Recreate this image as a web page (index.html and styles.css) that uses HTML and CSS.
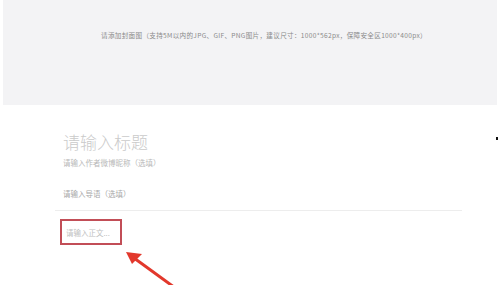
FILE: index.html
```html
<!DOCTYPE html>
<html lang="zh">
<head>
<meta charset="utf-8">
<link rel="stylesheet" href="styles.css">
</head>
<body>
<div class="page">
  <div class="cover">
    <p class="cover-text">请添加封面图（支持5M以内的JPG、GIF、PNG图片，建议尺寸：1000*562px，保障安全区1000*400px）</p>
  </div>
  <div class="editor">
    <div class="title">请输入标题</div>
    <div class="author">请输入作者微博昵称（选填）</div>
    <div class="lead">请输入导语（选填）</div>
    <div class="divider"></div>
    <div class="body-box"><span>请输入正文...</span></div>
  </div>
  <span class="dot"></span>
  <svg class="arrow" width="80" height="50" viewBox="0 0 80 50">
    <line x1="58" y1="48" x2="14" y2="16" stroke="#e2382c" stroke-width="3" stroke-linecap="round"/>
    <polygon points="6,10 22,12 12,22" fill="#e2382c"/>
  </svg>
</div>
</body>
</html>
```
FILE: styles.css
```css
html, body {
  margin: 0;
  padding: 0;
  background: #ffffff;
}
.page {
  position: relative;
  width: 499px;
  height: 285px;
  overflow: hidden;
  font-family: "Noto Sans CJK SC", "Liberation Sans", sans-serif;
}
.cover {
  margin: 0 2px 0 3px;
  height: 105px;
  background: #f3f3f5;
  display: flex;
  justify-content: center;
}
.cover-text {
  margin: 30px 0 0 28px;
  font-size: 6.6px;
  color: #8a8a8a;
  white-space: nowrap;
  letter-spacing: 0.3px;
}
.editor {
  padding: 27px 37px 0 58px;
  display: flex;
  flex-direction: column;
}
.title {
  padding-left: 5px;
  font-size: 17px;
  line-height: 20px;
  color: #cacaca;
  font-weight: 300;
}
.author {
  margin-top: 6px;
  padding-left: 5px;
  font-size: 7.5px;
  line-height: 10px;
  color: #b8b8b8;
}
.lead {
  margin-top: 21px;
  padding-left: 5px;
  font-size: 7.5px;
  line-height: 10px;
  color: #a8a8a8;
}
.divider {
  margin-top: 11px;
  margin-left: -3px;
  height: 1px;
  background: #ededed;
}
.body-box {
  margin-top: 8px;
  margin-left: 2px;
  width: 54px;
  height: 22px;
  border: 2px solid #c24e57;
  display: flex;
  align-items: center;
  padding-left: 4px;
  box-sizing: content-box;
}
.body-box span {
  font-size: 7.5px;
  color: #c0c0c0;
  white-space: nowrap;
}
.dot {
  position: absolute;
  left: 496px;
  top: 137px;
  width: 2px;
  height: 3px;
  background: #111;
}
.arrow {
  position: absolute;
  left: 120px;
  top: 242px;
}
```
